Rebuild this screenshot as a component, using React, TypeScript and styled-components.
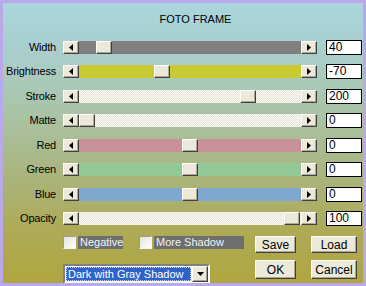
import React from "react";
import styled, { createGlobalStyle, css } from "styled-components";

const GlobalStyle = createGlobalStyle`
  html, body {
    margin: 0;
    padding: 0;
  }
  body {
    font-family: "Liberation Sans", Arial, sans-serif;
    font-size: 11px;
    color: #000;
  }
`;

const raised = css`
  box-sizing: border-box;
  background: #ece9d8;
  border: 1px solid;
  border-color: #fff #404040 #404040 #fff;
  box-shadow: inset -1px -1px 0 #aca899;
`;

const dither = css`
  background: repeating-conic-gradient(#fbfaf5 0 25%, #e6e3d8 0 50%) 0 0 / 2px 2px;
`;

const Frame = styled.div`
  box-sizing: border-box;
  width: 366px;
  height: 286px;
  border: 3px solid #b9a9e9;
  background: linear-gradient(
    to bottom,
    #a9d6de 0%,
    #a9cdc8 20%,
    #a9c3a4 40%,
    #aab47c 62%,
    #aeaa55 82%,
    #b0a640 100%
  );
  overflow: hidden;
`;

const Title = styled.div`
  margin-top: 10px;
  padding-left: 25px;
  height: 13px;
  line-height: 13px;
  text-align: center;
`;

const SliderGrid = styled.div`
  display: grid;
  grid-template-columns: 53px 254px 36px;
  column-gap: 7px;
  grid-auto-rows: 24.5px;
  align-items: center;
  margin-top: 9px;
`;

const Label = styled.div`
  text-align: right;
  line-height: 13px;
  letter-spacing: -0.2px;
`;

const Slider = styled.div`
  display: flex;
  height: 13px;
`;

const ArrowButton = styled.div`
  ${raised};
  width: 16px;
  height: 13px;
  display: flex;
  align-items: center;
  justify-content: center;
  flex: none;
`;

const Track = styled.div<{ $fill: string; $dither?: boolean }>`
  position: relative;
  flex: 1;
  height: 13px;
  ${(p) => (p.$dither ? dither : css`background: ${p.$fill};`)}
`;

const Thumb = styled.div`
  ${raised};
  position: absolute;
  top: 0;
  width: 16px;
  height: 13px;
`;

const ValueBox = styled.div`
  box-sizing: border-box;
  width: 36px;
  height: 15px;
  margin-left: 2px;
  background: #fff;
  border: 1px solid #000;
  padding-left: 2px;
  line-height: 13px;
  font-size: 12px;
`;

const Bottom = styled.div`
  display: flex;
  padding-left: 60px;
  margin-top: 5px;
`;

const LeftColumn = styled.div`
  display: flex;
  flex-direction: column;
  width: 180px;
`;

const CheckRow = styled.div`
  display: flex;
  align-items: center;
  height: 13px;
`;

const CheckBox = styled.div`
  box-sizing: border-box;
  width: 13px;
  height: 13px;
  background: linear-gradient(135deg, #e4e2da, #fff);
  border: 1px solid;
  border-color: #9a9a9a #f4f4f4 #f4f4f4 #9a9a9a;
  flex: none;
`;

const CheckLabel = styled.div<{ $width: number }>`
  box-sizing: border-box;
  width: ${(p) => p.$width}px;
  height: 13px;
  margin-left: 2px;
  padding-left: 2px;
  background: #6e6e6e;
  color: #f2f2f2;
  line-height: 13px;
  font-size: 11px;
  white-space: nowrap;
  overflow: hidden;
`;

const CheckItem = styled.div`
  display: flex;
  align-items: center;
  & + & {
    margin-left: 16px;
  }
`;

const Dropdown = styled.div`
  box-sizing: border-box;
  display: flex;
  width: 147px;
  height: 20px;
  margin-top: 15px;
  border: 2px solid;
  border-color: #808080 #fff #fff #808080;
  background: #fff;
`;

const DropdownValue = styled.div`
  flex: 1;
  margin: 1px;
  background: #2f62cc;
  color: #fff;
  font-size: 11px;
  line-height: 14px;
  padding-left: 2px;
  white-space: nowrap;
  overflow: hidden;
  outline: 1px dotted #c8d4f0;
  outline-offset: -1px;
`;

const DropdownButton = styled(ArrowButton)`
  width: 16px;
  height: 16px;
`;

const ButtonGrid = styled.div`
  display: grid;
  grid-template-columns: 41px 46px;
  grid-template-rows: 17px 19px;
  column-gap: 15px;
  row-gap: 7px;
  margin-left: 12px;
`;

const Button = styled.div`
  ${raised};
  display: flex;
  align-items: center;
  justify-content: center;
  font-size: 12px;
`;

const LeftTri = () => (
  <svg width="4" height="7" viewBox="0 0 4 7">
    <path d="M4 0 L0 3.5 L4 7 Z" fill="#000" />
  </svg>
);

const RightTri = () => (
  <svg width="4" height="7" viewBox="0 0 4 7">
    <path d="M0 0 L4 3.5 L0 7 Z" fill="#000" />
  </svg>
);

const DownTri = () => (
  <svg width="7" height="4" viewBox="0 0 7 4">
    <path d="M0 0 L7 0 L3.5 4 Z" fill="#000" />
  </svg>
);

interface Row {
  label: string;
  value: string;
  pos: number; // thumb offset 0..1
  fill: string;
  dither?: boolean;
}

const rows: Row[] = [
  { label: "Width", value: "40", pos: 0.083, fill: "#808080" },
  { label: "Brightness", value: "-70", pos: 0.366, fill: "#c9c932" },
  { label: "Stroke", value: "200", pos: 0.785, fill: "", dither: true },
  { label: "Matte", value: "0", pos: 0, fill: "", dither: true },
  { label: "Red", value: "0", pos: 0.5, fill: "#c99198" },
  { label: "Green", value: "0", pos: 0.5, fill: "#93c996" },
  { label: "Blue", value: "0", pos: 0.5, fill: "#7fa8d0" },
  { label: "Opacity", value: "100", pos: 1, fill: "", dither: true },
];

const THUMB_RANGE = 205;

const App: React.FC = () => {
  return (
    <>
      <GlobalStyle />
      <Frame>
        <Title>FOTO FRAME</Title>
        <SliderGrid>
          {rows.map((row) => (
            <React.Fragment key={row.label}>
              <Label>{row.label}</Label>
              <Slider>
                <ArrowButton>
                  <LeftTri />
                </ArrowButton>
                <Track $fill={row.fill} $dither={row.dither}>
                  <Thumb style={{ left: Math.round(row.pos * THUMB_RANGE) }} />
                </Track>
                <ArrowButton>
                  <RightTri />
                </ArrowButton>
              </Slider>
              <ValueBox>{row.value}</ValueBox>
            </React.Fragment>
          ))}
        </SliderGrid>
        <Bottom>
          <LeftColumn>
            <CheckRow>
              <CheckItem>
                <CheckBox />
                <CheckLabel $width={45}>Negative</CheckLabel>
              </CheckItem>
              <CheckItem>
                <CheckBox />
                <CheckLabel $width={90}>More Shadow</CheckLabel>
              </CheckItem>
            </CheckRow>
            <Dropdown>
              <DropdownValue>Dark with Gray Shadow</DropdownValue>
              <DropdownButton>
                <DownTri />
              </DropdownButton>
            </Dropdown>
          </LeftColumn>
          <ButtonGrid>
            <Button>Save</Button>
            <Button>Load</Button>
            <Button>OK</Button>
            <Button>Cancel</Button>
          </ButtonGrid>
        </Bottom>
      </Frame>
    </>
  );
};

export default App;
